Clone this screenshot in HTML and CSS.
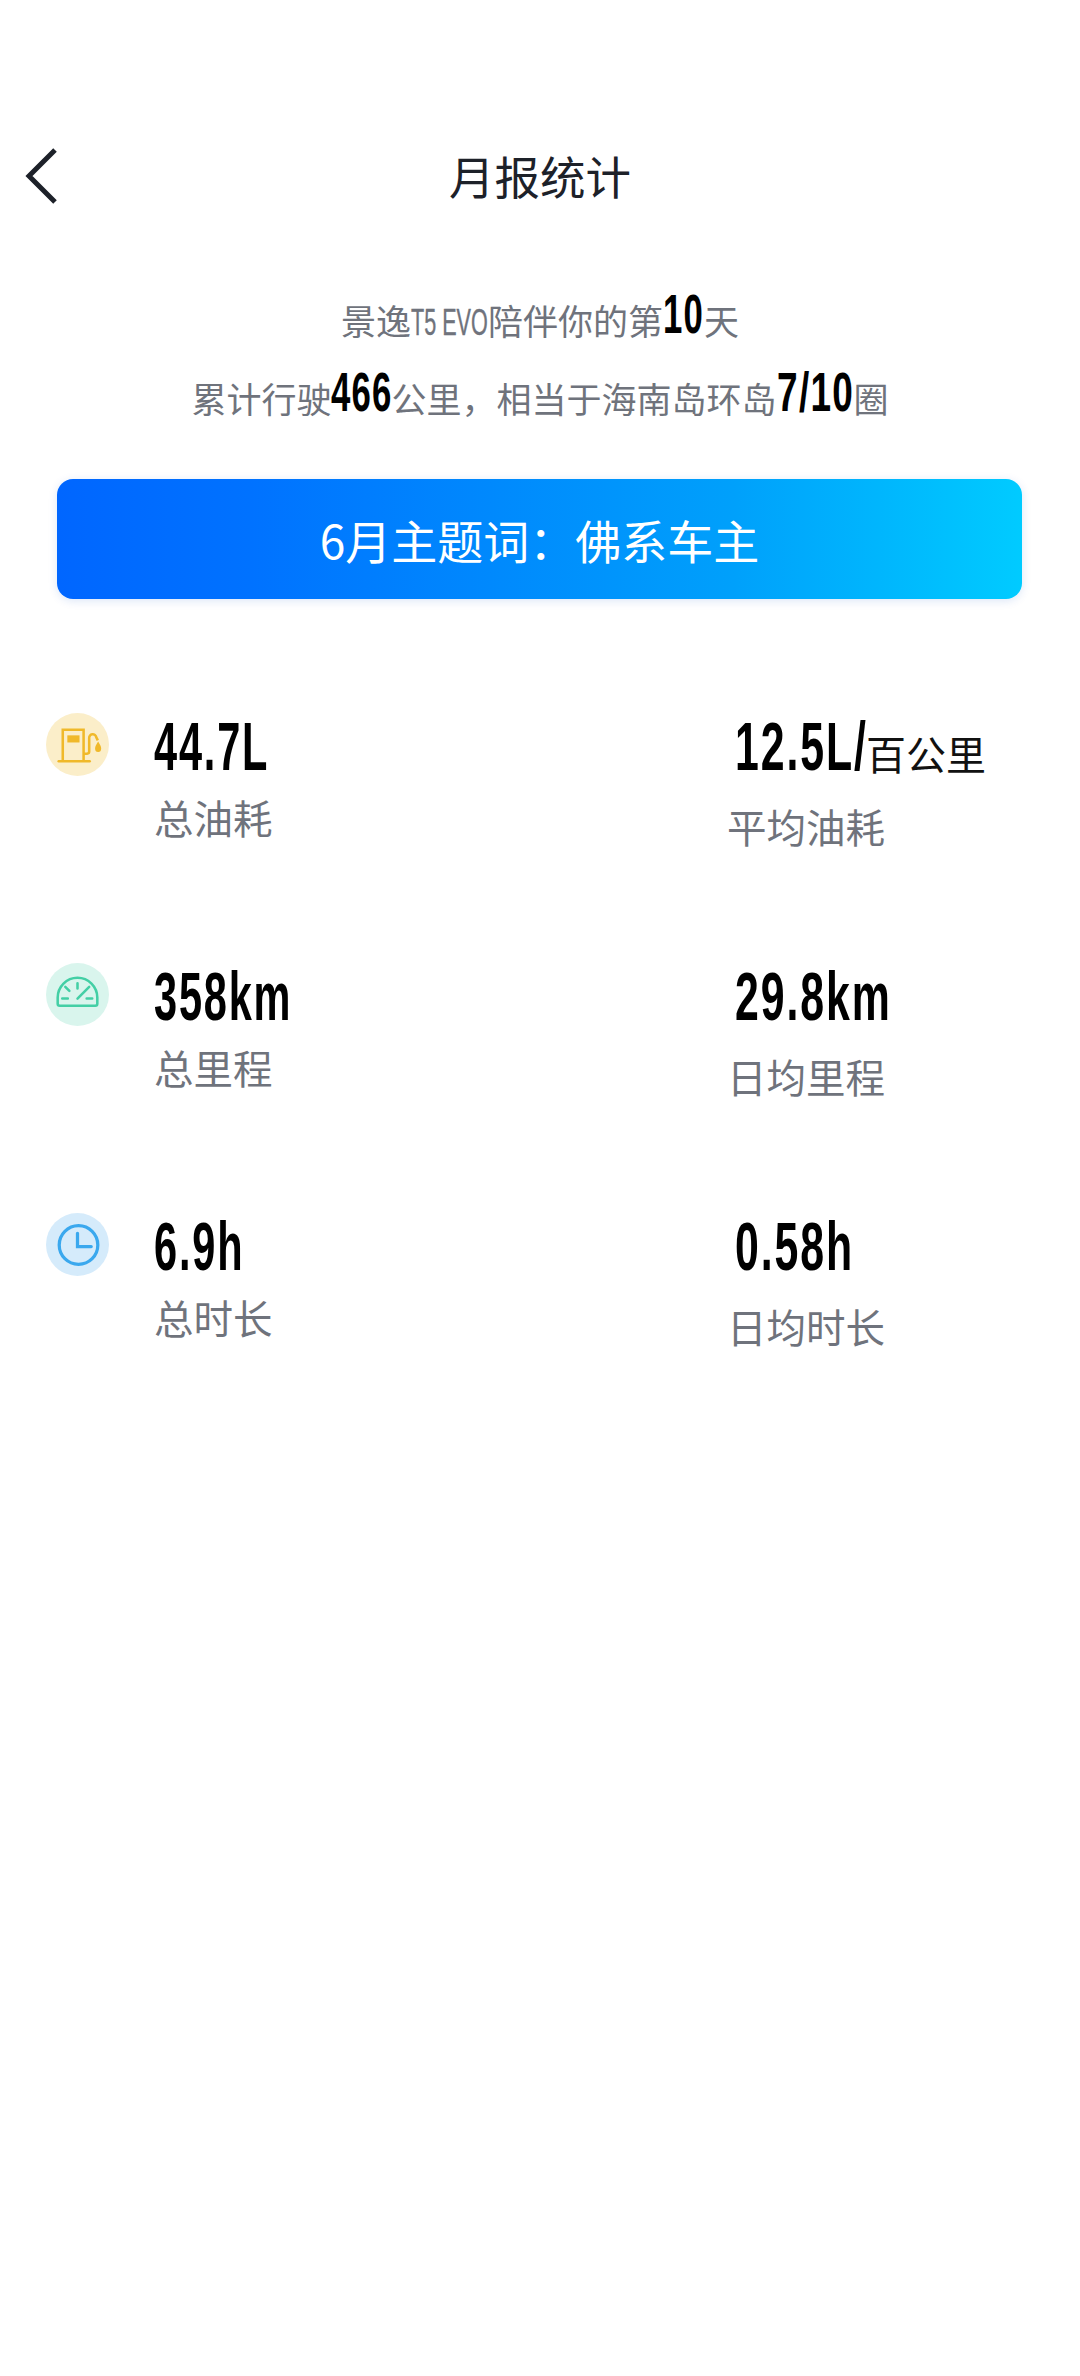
FILE: index.html
```html
<!DOCTYPE html>
<html lang="zh-CN">
<head>
<meta charset="utf-8">
<title>月报统计</title>
<link rel="stylesheet" href="styles.css">
</head>
<body>
<div class="page">
  <header class="nav">
    <svg class="back" width="34" height="56" viewBox="0 0 34 56"><path d="M30 2 L4 28 L30 54" fill="none" stroke="#1d2129" stroke-width="5"/></svg>
    <h1 class="title">月报统计</h1>
  </header>
  <section class="summary">
    <p class="line">景逸<span class="cond small">T5 EVO</span>陪伴你的第<b class="cond num n-days">10</b>天</p>
    <p class="line">累计行驶<b class="cond num n-km">466</b>公里，相当于海南岛环岛<b class="cond num n-lap">7/10</b>圈</p>
  </section>
  <div class="banner">6月主题词：佛系车主</div>
  <section class="stats">
    <div class="row">
      <svg class="badge" viewBox="0 0 62 62">
        <circle cx="31" cy="31" r="31" fill="#fbeec9"/>
        <g fill="none" stroke="#f0b92a" stroke-width="2.500">
          <path d="M16.500 47V16.500H37V47"/>
          <path d="M12.500 47.500H43" stroke-linecap="round"/>
          <path d="M37 40h3.500a2 2 0 0 0 2-2V25a3.500 3.500 0 0 1 7 -1l1.500 3"/>
        </g>
        <rect x="21" y="22" width="12" height="7" fill="#f0b92a"/>
        <path d="M51.300 28c2 3.300 3 5 3 7a3 3.500 0 0 1-6 0c0-2 1-3.700 3-7z" fill="#f0b92a"/>
      </svg>
      <div class="stat">
        <div class="value"><span class="cond fig">44.7L</span></div>
        <div class="label">总油耗</div>
      </div>
      <div class="stat stat-right">
        <div class="value"><span class="cond fig fig-right w-rate">12.5L/</span><span class="unit">百公里</span></div>
        <div class="label">平均油耗</div>
      </div>
    </div>
    <div class="row">
      <svg class="badge" viewBox="0 0 62 62">
        <circle cx="31" cy="31" r="31" fill="#d9f5ed"/>
        <g fill="none" stroke="#43cfa5" stroke-width="2.500" stroke-linecap="round" stroke-linejoin="round">
          <path d="M11.500 40V34a19.500 19.500 0 0 1 39 0v6a2 2 0 0 1-2 2H13.500a2 2 0 0 1-2-2z"/>
          <path d="M31 20v5M19 23.500l4 4M16 35h5.500M40 35h5.500M31 35L42.500 23.500"/>
        </g>
      </svg>
      <div class="stat">
        <div class="value"><span class="cond fig">358km</span></div>
        <div class="label">总里程</div>
      </div>
      <div class="stat stat-right">
        <div class="value"><span class="cond fig fig-right">29.8km</span></div>
        <div class="label">日均里程</div>
      </div>
    </div>
    <div class="row">
      <svg class="badge" viewBox="0 0 62 62">
        <circle cx="31" cy="31" r="31" fill="#d5ebfb"/>
        <g fill="none" stroke="#3aa8ee" stroke-width="3.200">
          <circle cx="32" cy="31.500" r="19"/>
          <path d="M31 20V33H44.500" stroke-linecap="round"/>
        </g>
      </svg>
      <div class="stat">
        <div class="value"><span class="cond fig">6.9h</span></div>
        <div class="label">总时长</div>
      </div>
      <div class="stat stat-right">
        <div class="value"><span class="cond fig fig-right">0.58h</span></div>
        <div class="label">日均时长</div>
      </div>
    </div>
  </section>
</div>
</body>
</html>
```
FILE: styles.css
```css
* { box-sizing: border-box; }
html, body { margin: 0; padding: 0; background: #fff; }
body { font-family: "Noto Sans CJK SC", "Liberation Sans", sans-serif; }
.page { width: 1080px; height: 2376px; overflow: hidden; }

.nav { position: relative; height: 60px; margin-top: 145px; display: flex; align-items: center; justify-content: center; }
.back { position: absolute; left: 25px; top: 3px; }
.title { margin: 0; font-size: 45.500px; font-weight: 400; color: #1d2129; line-height: 60px; }

.cond { display: inline-block; transform-origin: left center; white-space: nowrap; font-family: "Liberation Sans", sans-serif; }

.summary { margin-top: 70px; text-align: center; color: #6f737c; font-size: 35px; }
.line { margin: 0; height: 78px; line-height: 78px; white-space: nowrap; }
.small { width: 77px; font-size: 36px; transform: scaleX(.6); text-align: left; -webkit-text-stroke: .4px #6f737c; }
.num { font-weight: 700; font-size: 56px; letter-spacing: 2px; color: #000; text-align: left; vertical-align: 2px; }
.n-days { width: 41px; transform: scaleX(.62); }
.n-km { width: 60px; transform: scaleX(.62); }
.n-lap { width: 77px; transform: scaleX(.66); }

.banner {
  margin: 48px 58px 0 57px; height: 120px; border-radius: 16px;
  background: linear-gradient(90deg, #0066ff 0%, #0072ff 20%, #00a0fb 70%, #00cbff 100%);
  box-shadow: 0 2px 10px rgba(0, 80, 200, .14);
  color: #fff; font-size: 46px; text-align: center; line-height: 120px;
}

.stats { margin-top: 114px; }
.row { display: flex; height: 250px; padding-left: 46px; }
.badge { flex: none; width: 63px; height: 63px; }

.stat { width: 573px; margin-left: 45px; }
.stat-right { width: auto; margin-left: 0; }
.value { height: 66px; line-height: 66px; color: #000; white-space: nowrap; }
.fig { font-weight: 700; font-size: 68px; letter-spacing: 3px; transform: scaleX(.61); }
.fig-right { margin-left: 8px; transform: scaleX(.63); }
.w-rate { width: 131px; }
.unit { font-size: 40px; font-weight: 400; color: #111; }
.label { margin-top: 13px; font-size: 39.500px; line-height: 50px; color: #6f737c; }
.stat-right .label { margin-top: 22px; }
```
